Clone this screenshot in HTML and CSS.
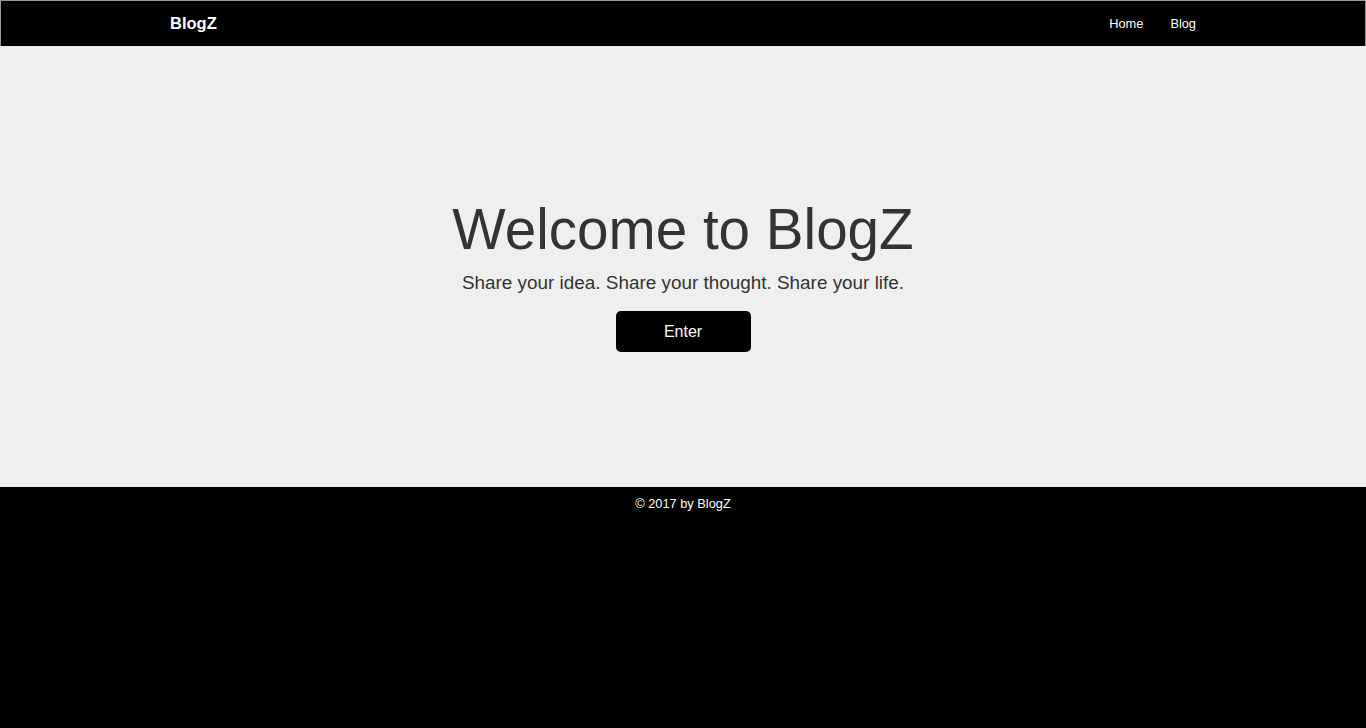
FILE: index.html
```html
<!DOCTYPE html>
<html lang="en">
<head>
<meta charset="utf-8">
<title>BlogZ</title>
<link rel="stylesheet" href="styles.css">
</head>
<body>
<header class="topbar">
  <div class="container topbar-inner">
    <a class="brand" href="#">BlogZ</a>
    <nav class="nav">
      <a href="#">Home</a>
      <a href="#">Blog</a>
    </nav>
  </div>
</header>
<main class="hero">
  <h1 class="hero-title">Welcome to BlogZ</h1>
  <p class="hero-sub">Share your idea. Share your thought. Share your life.</p>
  <a class="btn" href="#">Enter</a>
</main>
<footer class="footer">
  <p>&copy; 2017 by BlogZ</p>
</footer>
</body>
</html>
```
FILE: styles.css
```css
* { box-sizing: border-box; }
html, body { margin: 0; padding: 0; }
body {
  font-family: "Liberation Sans", Arial, sans-serif;
  background: #000;
  height: 728px;
}
a { text-decoration: none; color: inherit; }

.topbar {
  background: #000;
  border: 1px solid #9a9a9a;
  border-bottom: none;
  height: 46px;
}
.container {
  width: 1026px;
  margin: 0 auto;
}
.topbar-inner {
  display: flex;
  justify-content: space-between;
  align-items: center;
  height: 45px;
}
.brand {
  color: #fff;
  font-weight: bold;
  font-size: 16.5px;
}
.nav {
  display: flex;
  gap: 27px;
}
.nav a {
  color: #fff;
  font-size: 12.8px;
}

.hero {
  background: #efefef;
  height: 441px;
  padding-top: 156px;
  display: flex;
  flex-direction: column;
  align-items: center;
}
.hero-title {
  margin: 0;
  font-size: 56.6px;
  line-height: 56px;
  font-weight: normal;
  color: #333;
}
.hero-sub {
  margin: 14px 0 0;
  font-size: 18.9px;
  line-height: 22px;
  color: #333;
}
.btn {
  margin-top: 17px;
  width: 135px;
  height: 41px;
  background: #000;
  color: #fff;
  border-radius: 5px;
  display: flex;
  align-items: center;
  justify-content: center;
  font-size: 16px;
}

.footer {
  background: #000;
  color: #fff;
  text-align: center;
  font-size: 12.8px;
}
.footer p {
  margin: 0;
  padding-top: 9px;
}
```
